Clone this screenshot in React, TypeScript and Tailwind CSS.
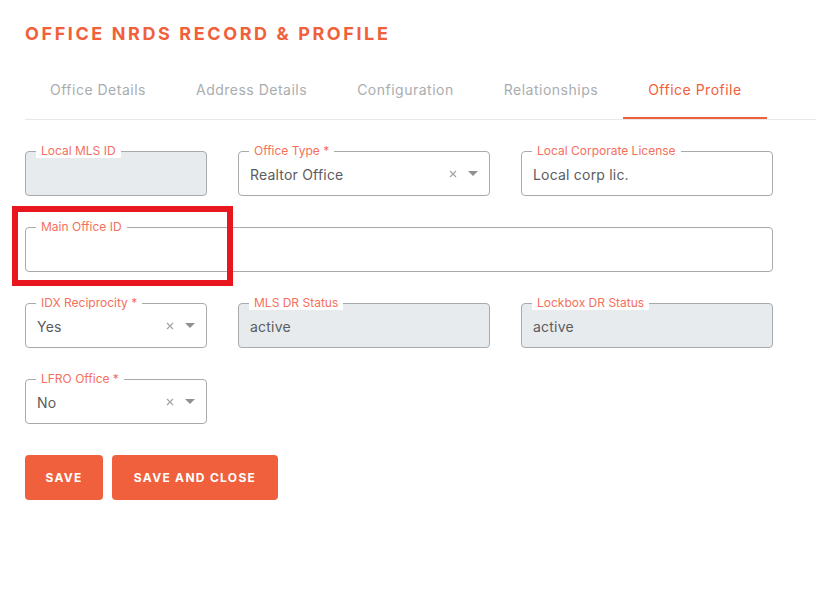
import type { ReactNode } from "react";

const tabs = ["Office Details", "Address Details", "Configuration", "Relationships", "Office Profile"];

type FieldProps = {
  label: string;
  value?: string;
  disabled?: boolean;
  select?: boolean;
  className?: string;
};

function SelectIcons() {
  return (
    <div className="flex items-center gap-[11px] pr-[11px]">
      <svg width="8" height="8" viewBox="0 0 8 8" className="text-[#a3a6a8]">
        <path d="M1 1 7 7M7 1 1 7" stroke="currentColor" strokeWidth="1.3" />
      </svg>
      <svg width="10" height="5" viewBox="0 0 10 5" className="text-[#8e9194]">
        <path d="M0 0h10L5 5z" fill="currentColor" />
      </svg>
    </div>
  );
}

function Field({ label, value, disabled, select, className }: FieldProps) {
  return (
    <div
      className={`relative flex h-[45px] items-center justify-between rounded-[4px] border border-[#a6aaac] ${
        disabled ? "bg-[#e8ebee]" : "bg-white"
      } ${className ?? ""}`}
    >
      <span className="absolute -top-[8px] left-[10px] bg-white px-[5px] text-[12px] leading-[14px] text-[#f4705c]">
        {label}
      </span>
      <span className="pl-[11px] pt-[2px] text-[14px] tracking-[0.2px] text-[#5a5c5e]">{value}</span>
      {select && <SelectIcons />}
    </div>
  );
}

function Button({ children, className }: { children: ReactNode; className: string }) {
  return (
    <button
      className={`h-[45px] rounded-[4px] bg-[#f0603c] text-[12px] font-bold tracking-[1.3px] text-white ${className}`}
    >
      {children}
    </button>
  );
}

export default function App() {
  return (
    <div className="min-h-[597px] bg-white pl-[25px] font-['Inter',sans-serif]">
      <h1 className="pt-[23px] text-[18px] font-bold leading-[22px] tracking-[2.6px] text-[#f0603a]">
        OFFICE NRDS RECORD &amp; PROFILE
      </h1>

      <div className="mt-[15px] flex h-[60px] border-b border-[#e6e8ea]">
        {tabs.map((t) => {
          const active = t === "Office Profile";
          return (
            <div
              key={t}
              className={`flex items-center px-[25px] text-[14px] tracking-[0.5px] ${
                active ? "border-b-[2px] border-[#f0603a] pt-[2px] text-[#f0603a]" : "text-[#a9adb0]"
              }`}
            >
              {t}
            </div>
          );
        })}
      </div>

      <div className="relative mt-[31px] grid w-[748px] grid-cols-[182px_252px_252px] gap-[31px]">
        <Field label="Local MLS ID" disabled />
        <Field label="Office Type *" value="Realtor Office" select />
        <Field label="Local Corporate License" value="Local corp lic." />

        <Field label="Main Office ID" className="col-span-3" />

        <Field label="IDX Reciprocity *" value="Yes" select />
        <Field label="MLS DR Status" value="active" disabled />
        <Field label="Lockbox DR Status" value="active" disabled />

        <Field label="LFRO Office *" value="No" select />

        {/* highlight around the main office field */}
        <div className="pointer-events-none absolute left-[-13px] top-[55px] h-[80px] w-[221px] border-[6px] border-[#e8171f]" />
      </div>

      <div className="mt-[31px] flex gap-[9px]">
        <Button className="w-[78px]">SAVE</Button>
        <Button className="w-[166px]">SAVE AND CLOSE</Button>
      </div>
    </div>
  );
}
